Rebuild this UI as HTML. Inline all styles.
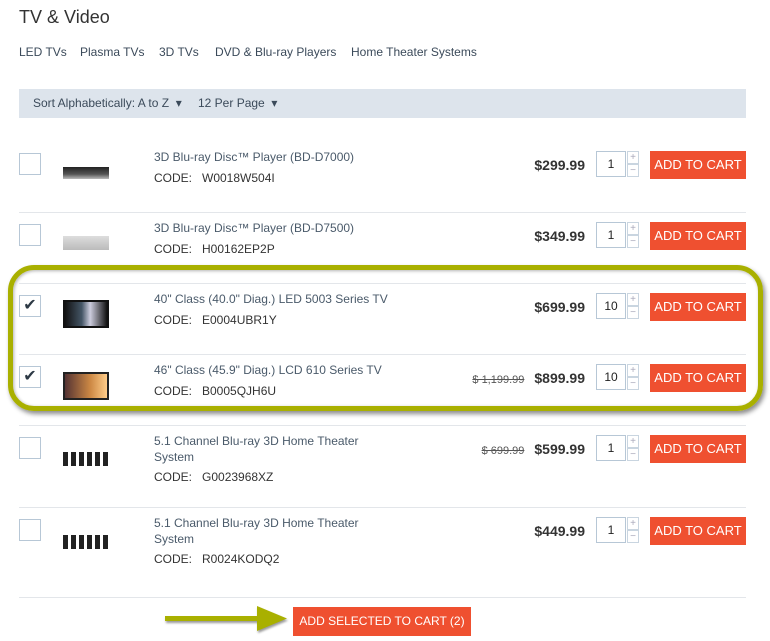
<!DOCTYPE html>
<html><head><meta charset="utf-8"><style>
*{margin:0;padding:0;box-sizing:border-box}
body{width:770px;height:641px;background:#fff;font-family:"Liberation Sans",sans-serif;position:relative;overflow:hidden;color:#333}
.a{position:absolute;white-space:nowrap}
h1{position:absolute;left:19px;top:7px;font-size:18px;font-weight:normal;color:#333}
.nav{position:absolute;top:45px;font-size:12px;color:#3b4a5a}
.bar{position:absolute;left:19px;top:89px;width:727px;height:29px;background:#dde4ec;font-size:12px;color:#3b4a5a}
.hr{position:absolute;left:19px;width:727px;height:1px;background:#e3e6ea}
.cb{position:absolute;left:19px;width:22px;height:22px;border:1px solid #b7c7d6;background:#fff;font-size:16px;line-height:20px;text-align:center;color:#2d3945}
.t{position:absolute;left:154px;font-size:12px;color:#4a5a6a;line-height:16px}
.c{position:absolute;left:154px;font-size:12px;color:#333;line-height:16px}
.p{position:absolute;right:185px;font-size:14px;font-weight:bold;color:#333;line-height:28px;white-space:nowrap}
.o{font-weight:normal;font-size:11px;color:#555;text-decoration:line-through;margin-right:10px}
.q{position:absolute;left:596px;width:30px;height:26px;border:1px solid #b7c7d6;font-size:12px;line-height:24px;text-align:center;color:#222}
.pm{position:absolute;left:627px;width:12px;height:13px;border:1px solid #c9d5e0;font-size:10px;line-height:11px;text-align:center;color:#aab}
.b{position:absolute;left:650px;width:96px;height:28px;background:#ef5030;color:#fff;font-size:13px;line-height:28px;text-align:center;white-space:nowrap}
.img{position:absolute;left:63px}
</style></head><body>
<h1>TV &amp; Video</h1>
<div class="nav" style="left:19px">LED TVs</div>
<div class="nav" style="left:80px">Plasma TVs</div>
<div class="nav" style="left:159px">3D TVs</div>
<div class="nav" style="left:215px">DVD &amp; Blu-ray Players</div>
<div class="nav" style="left:351px">Home Theater Systems</div>
<div class="bar"><span class="a" style="left:14px;top:7px">Sort Alphabetically: A to Z &nbsp;▾</span><span class="a" style="left:179px;top:7px">12 Per Page &nbsp;▾</span></div>

<div class="hr" style="top:212px"></div>
<div class="hr" style="top:283px"></div>
<div class="hr" style="top:354px"></div>
<div class="hr" style="top:425px"></div>
<div class="hr" style="top:507px"></div>
<div class="hr" style="top:597px"></div>

<div class="cb" style="top:153px"></div>
<div class="img" style="top:167px;width:46px;height:12px;background:linear-gradient(#222,#555 60%,#bbb)"></div>
<div class="t" style="top:149px">3D Blu-ray Disc™ Player (BD-D7000)</div>
<div class="c" style="top:170px">CODE: &nbsp; W0018W504I</div>
<div class="p" style="top:151px">$299.99</div>
<div class="q" style="top:151px">1</div><div class="pm" style="top:151px">+</div><div class="pm" style="top:164px">−</div>
<div class="b" style="top:151px">ADD TO CART</div>

<div class="cb" style="top:224px"></div>
<div class="img" style="top:236px;width:46px;height:14px;background:linear-gradient(#ddd,#bbb)"></div>
<div class="t" style="top:220px">3D Blu-ray Disc™ Player (BD-D7500)</div>
<div class="c" style="top:241px">CODE: &nbsp; H00162EP2P</div>
<div class="p" style="top:222px">$349.99</div>
<div class="q" style="top:222px">1</div><div class="pm" style="top:222px">+</div><div class="pm" style="top:235px">−</div>
<div class="b" style="top:222px">ADD TO CART</div>

<div class="cb" style="top:295px">✔</div>
<div class="img" style="top:300px;width:46px;height:28px;background:linear-gradient(90deg,#111,#456 40%,#ccd 60%,#111);border:2px solid #111"></div>
<div class="t" style="top:291px">40" Class (40.0" Diag.) LED 5003 Series TV</div>
<div class="c" style="top:312px">CODE: &nbsp; E0004UBR1Y</div>
<div class="p" style="top:293px">$699.99</div>
<div class="q" style="top:293px">10</div><div class="pm" style="top:293px">+</div><div class="pm" style="top:306px">−</div>
<div class="b" style="top:293px">ADD TO CART</div>

<div class="cb" style="top:366px">✔</div>
<div class="img" style="top:372px;width:46px;height:28px;background:linear-gradient(90deg,#533,#c84 60%,#fc8);border:2px solid #222"></div>
<div class="t" style="top:362px">46" Class (45.9" Diag.) LCD 610 Series TV</div>
<div class="c" style="top:383px">CODE: &nbsp; B0005QJH6U</div>
<div class="p" style="top:364px"><span class="o">$ 1,199.99</span>$899.99</div>
<div class="q" style="top:364px">10</div><div class="pm" style="top:364px">+</div><div class="pm" style="top:377px">−</div>
<div class="b" style="top:364px">ADD TO CART</div>

<div class="cb" style="top:437px"></div>
<div class="img" style="top:452px;width:46px;height:14px;background:repeating-linear-gradient(90deg,#222 0 5px,#fff 5px 8px)"></div>
<div class="t" style="top:433px">5.1 Channel Blu-ray 3D Home Theater<br>System</div>
<div class="c" style="top:469px">CODE: &nbsp; G0023968XZ</div>
<div class="p" style="top:435px"><span class="o">$ 699.99</span>$599.99</div>
<div class="q" style="top:435px">1</div><div class="pm" style="top:435px">+</div><div class="pm" style="top:448px">−</div>
<div class="b" style="top:435px">ADD TO CART</div>

<div class="cb" style="top:519px"></div>
<div class="img" style="top:535px;width:46px;height:14px;background:repeating-linear-gradient(90deg,#222 0 5px,#fff 5px 8px)"></div>
<div class="t" style="top:515px">5.1 Channel Blu-ray 3D Home Theater<br>System</div>
<div class="c" style="top:551px">CODE: &nbsp; R0024KODQ2</div>
<div class="p" style="top:517px">$449.99</div>
<div class="q" style="top:517px">1</div><div class="pm" style="top:517px">+</div><div class="pm" style="top:530px">−</div>
<div class="b" style="top:517px">ADD TO CART</div>

<div class="a" style="left:8px;top:265px;width:755px;height:146px;border:5px solid #a9b000;border-radius:26px;box-shadow:2px 3px 5px rgba(0,0,0,.45),inset 1px 1px 3px rgba(0,0,0,.3)"></div>

<svg class="a" style="left:160px;top:598px" width="135" height="40"><g filter="drop-shadow(1px 2px 1px rgba(0,0,0,.4))"><rect x="5" y="18" width="95" height="5" fill="#a9b000"/><polygon points="97,8 127,20.5 97,33" fill="#a9b000"/></g></svg>
<div class="b" style="left:293px;top:607px;width:178px;height:29px;line-height:29px;font-size:12px">ADD SELECTED TO CART (2)</div>
</body></html>
